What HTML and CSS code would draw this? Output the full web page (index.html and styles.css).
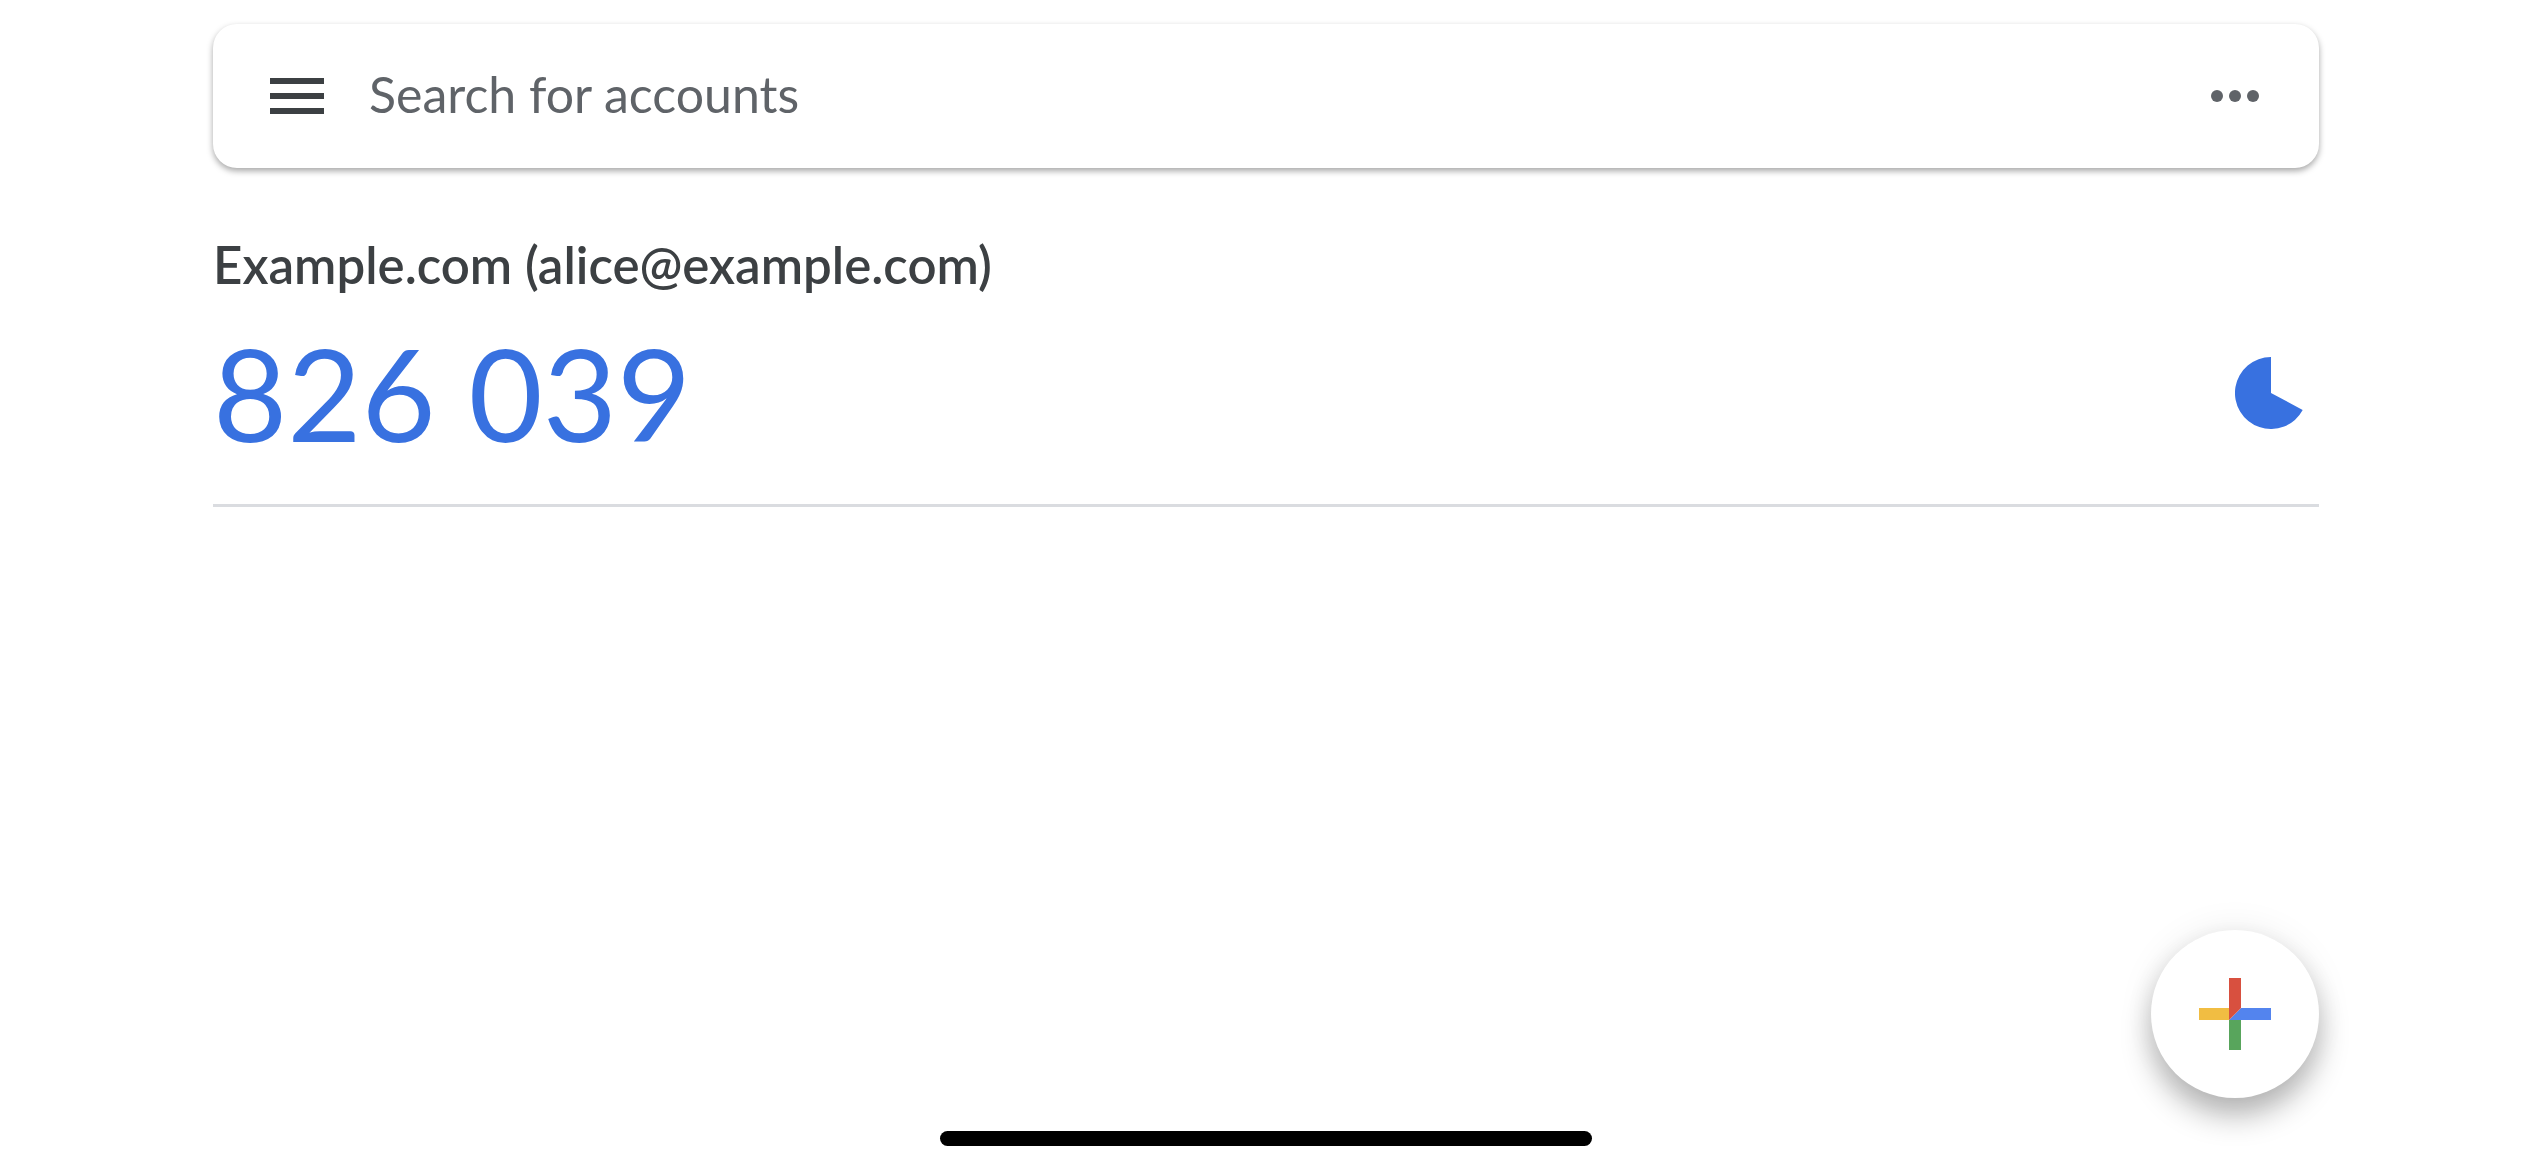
FILE: index.html
```html
<!DOCTYPE html>
<html lang="en">
<head>
<meta charset="utf-8">
<meta name="viewport" content="width=device-width, initial-scale=1">
<title>Authenticator</title>
<link rel="stylesheet" href="styles.css">
</head>
<body>
<header class="search-bar">
  <button class="icon-button" type="button" aria-label="Menu">
    <svg class="icon-menu" viewBox="0 0 54 36" aria-hidden="true"><path d="M0 0h54v6H0zM0 15h54v6H0zM0 30h54v6H0z"/></svg>
  </button>
  <input class="search-input" type="text" placeholder="Search for accounts" aria-label="Search for accounts">
  <button class="icon-button" type="button" aria-label="More options">
    <svg class="icon-more" viewBox="0 0 48 12" aria-hidden="true"><circle cx="6" cy="6" r="6"/><circle cx="24" cy="6" r="6"/><circle cx="42" cy="6" r="6"/></svg>
  </button>
</header>
<main class="accounts">
  <article class="account">
    <h2 class="account-name">Example.com (alice@example.com)</h2>
    <div class="account-row">
      <p class="account-code">826 039</p>
      <svg class="timer" viewBox="0 0 72 72" role="img" aria-label="Time remaining"><path d="M36 36V0A36 36 0 1 0 67.700 53Z"/></svg>
    </div>
  </article>
</main>
<button class="add-button" type="button" aria-label="Add account">
  <svg class="icon-add" viewBox="0 0 72 72" aria-hidden="true">
    <path fill="#f1bd42" d="M0 30h30v12H0z"/>
    <path fill="#58a55c" d="M30 42h12v30H30z"/>
    <path fill="#5384ee" d="M42 30h30v12H30z"/>
    <path fill="#d8503f" d="M30 0h12v30L30 42z"/>
  </svg>
</button>
<footer class="home-area"><div class="home-indicator"></div></footer>
</body>
</html>
```
FILE: styles.css
```css
* {
  box-sizing: border-box;
}

body {
  display: flex;
  flex-direction: column;
  min-height: 100vh;
  margin: 0;
  padding: 24px 213px;
  background: #fff;
  color: #3c4043;
  font-family: Lato, "Open Sans", sans-serif;
}

button {
  padding: 0;
  border: 0;
  background: none;
  cursor: pointer;
}

svg {
  display: block;
}

.search-bar {
  display: flex;
  align-items: center;
  gap: 12px;
  padding: 36px 48px;
  border-radius: 24px;
  background: #fff;
  box-shadow: 0 3px 6px rgba(0, 0, 0, 0.35);
}

.icon-button {
  display: grid;
  place-items: center;
  width: 72px;
  height: 72px;
}

.icon-menu {
  width: 54px;
  fill: #3c4043;
}

.icon-more {
  width: 48px;
  fill: #5f6368;
}

.search-input {
  flex: 1;
  min-width: 0;
  height: 72px;
  padding: 0 24px 4px;
  border: 0;
  outline: 0;
  background: none;
  color: #3c4043;
  font: 400 50px/68px Lato, "Open Sans", sans-serif;
}

.search-input::placeholder {
  color: #5f6368;
  opacity: 1;
}

.accounts {
  flex: 1;
}

.account {
  padding: 67px 0 31px;
  border-bottom: 3px solid #dadce0;
}

.account-name {
  margin: 0;
  font-size: 51px;
  font-weight: 600;
  line-height: 60px;
}

.account-row {
  display: flex;
  align-items: center;
  justify-content: space-between;
  padding: 18px 12px 0 0;
}

.account-code {
  margin: 0;
  color: #3871e0;
  font-size: 128px;
  line-height: 160px;
}

.timer {
  width: 72px;
  fill: #3871e0;
}

.add-button {
  position: fixed;
  right: 213px;
  bottom: 72px;
  display: grid;
  place-items: center;
  width: 168px;
  height: 168px;
  border-radius: 50%;
  background: #fff;
  box-shadow: 0 18px 30px rgba(0, 0, 0, 0.28), 0 0 36px rgba(0, 0, 0, 0.08);
}

.icon-add {
  width: 72px;
}

.home-indicator {
  width: 31%;
  height: 15px;
  margin: 0 auto;
  border-radius: 8px;
  background: #000;
}
```
